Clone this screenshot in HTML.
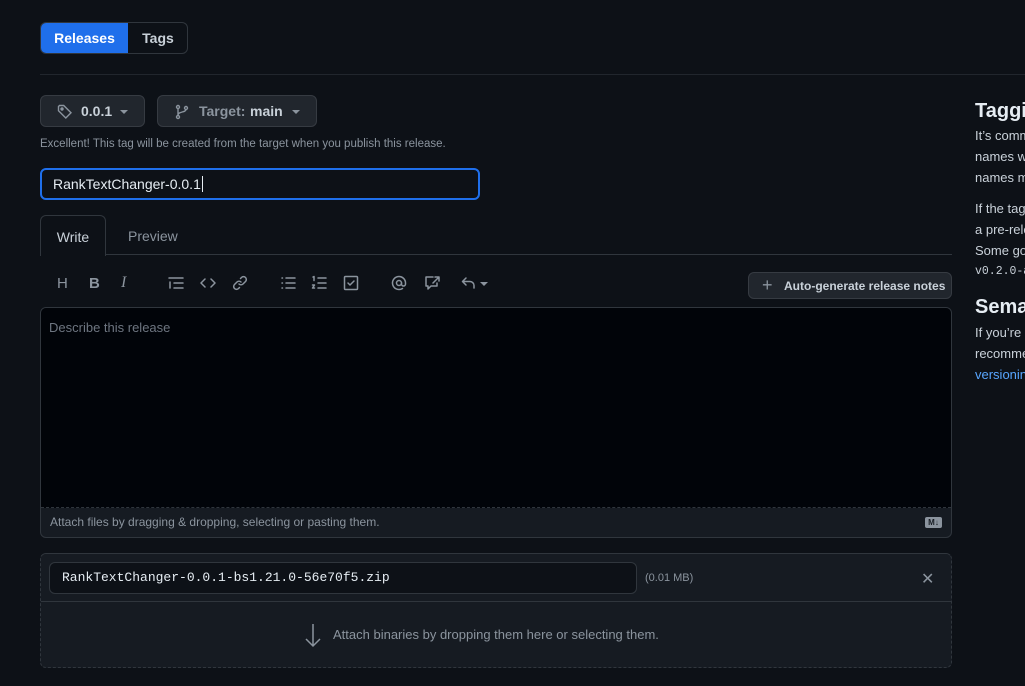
<!DOCTYPE html>
<html><head><meta charset="utf-8"><style>
*{box-sizing:border-box;margin:0;padding:0}
body{width:1025px;height:686px;overflow:hidden;background:#0d1117;font-family:"Liberation Sans",sans-serif;color:#c9d1d9;position:relative}
.a{position:absolute}
.btn{position:absolute;background:#21262d;border:1px solid #363b42;border-radius:6px;display:flex;align-items:center;font-size:14px;font-weight:bold;color:#c9d1d9}
svg{display:block}
.ic{position:absolute;top:275px;width:16px;height:16px;stroke:#8b949e;fill:none;stroke-width:1.5;stroke-linecap:round;stroke-linejoin:round}
.sidewrap{position:absolute;left:975px;top:0;width:50px;height:686px;overflow:hidden}
.side{position:absolute;left:0;font-size:13px;color:#c9d1d9;white-space:nowrap}
</style></head><body>
<div class="a" style="left:40px;top:22px;width:148px;height:32px;border:1px solid #30363d;border-radius:6px;overflow:hidden;font-size:14px;font-weight:bold">
 <div class="a" style="left:0;top:0;width:87px;height:30px;background:#1f6feb;color:#fff;display:flex;align-items:center;justify-content:center">Releases</div>
 <div class="a" style="left:87px;top:0;width:60px;height:30px;color:#c9d1d9;display:flex;align-items:center;justify-content:center">Tags</div>
</div>
<div class="a" style="left:40px;top:74px;width:985px;height:1px;background:#21262d"></div>

<div class="btn" style="left:40px;top:95px;width:105px;height:32px">
 <svg class="a" style="left:16px;top:8px" width="16" height="16" viewBox="0 0 16 16" fill="none" stroke="#8b949e" stroke-width="1.4"><path d="M1.5 2.5v4.2l7.3 7.3 5.2-5.2L6.7 1.5H2.5z"/><circle cx="5" cy="5" r="1" fill="#8b949e"/></svg>
 <span class="a" style="left:40px;top:7px">0.0.1</span>
 <span class="a" style="left:79px;top:14px;border:4px solid transparent;border-top:4px solid #8b949e"></span>
</div>
<div class="btn" style="left:157px;top:95px;width:160px;height:32px">
 <svg class="a" style="left:16px;top:8px" width="16" height="16" viewBox="0 0 16 16" fill="none" stroke="#8b949e" stroke-width="1.4"><circle cx="4" cy="3" r="1.5"/><circle cx="4" cy="13" r="1.5"/><circle cx="12" cy="4" r="1.5"/><path d="M4 4.5v7M12 5.5c0 3-8 2-8 5.5"/></svg>
 <span class="a" style="left:41px;top:7px;color:#8b949e">Target:</span>
 <span class="a" style="left:92px;top:7px">main</span>
 <span class="a" style="left:134px;top:14px;border:4px solid transparent;border-top:4px solid #8b949e"></span>
</div>
<div class="a" style="left:40px;top:138px;font-size:11.5px;color:#8b949e">Excellent! This tag will be created from the target when you publish this release.</div>
<div class="a" style="left:40px;top:168px;width:440px;height:32px;border:2px solid #1f6feb;border-radius:6px;background:#0d1117;font-size:14px;padding:6px 11px;color:#e6edf3">RankTextChanger-0.0.1<span style="border-left:1px solid #e6edf3;margin-left:1px"></span></div>

<div class="a" style="left:40px;top:215px;width:66px;height:41px;border:1px solid #30363d;border-bottom:none;border-radius:6px 6px 0 0;background:#0d1117;font-size:14px;color:#c9d1d9;text-align:center;padding-top:13px;z-index:2">Write</div>
<div class="a" style="left:128px;top:228px;font-size:14px;color:#8b949e">Preview</div>
<div class="a" style="left:40px;top:254px;width:912px;height:1px;background:#30363d"></div>

<div class="a" style="left:57px;top:275px;font-size:15px;color:#8b949e">H</div>
<div class="a" style="left:89px;top:275px;font-size:15px;font-weight:bold;color:#8b949e">B</div>
<div class="a" style="left:121px;top:274px;font-size:16px;font-style:italic;color:#8b949e;font-family:'Liberation Serif',serif">I</div>
<svg class="ic" style="left:168px" viewBox="0 0 16 16"><path d="M1 3h14M6 8h9M6 13h9M2 7v6"/></svg>
<svg class="ic" style="left:200px" viewBox="0 0 16 16"><path d="M5 4L1 8l4 4M11 4l4 4-4 4"/></svg>
<svg class="ic" style="left:232px" viewBox="0 0 16 16"><path d="M7 9a3 3 0 0 0 4 0l2.5-2.5a2.8 2.8 0 0 0-4-4L8.5 3.5M9 7a3 3 0 0 0-4 0L2.5 9.5a2.8 2.8 0 0 0 4 4l1-1"/></svg>
<svg class="ic" style="left:280px" viewBox="0 0 16 16"><path d="M6 3h9M6 8h9M6 13h9M2 3h.5M2 8h.5M2 13h.5"/></svg>
<svg class="ic" style="left:311px" viewBox="0 0 16 16"><path d="M7 3h8M7 8h8M7 13h8M2 2l1-.5v4M1.5 10h2l-2 3h2"/></svg>
<svg class="ic" style="left:343px" viewBox="0 0 16 16"><rect x="1.5" y="1.5" width="13" height="13" rx="1"/><path d="M5 8l2 2 4-4"/></svg>
<svg class="ic" style="left:391px" viewBox="0 0 16 16"><circle cx="8" cy="8" r="2.5"/><path d="M10.5 8v1a2 2 0 0 0 4 0V8a6.5 6.5 0 1 0-3 5.5"/></svg>
<svg class="ic" style="left:424px" viewBox="0 0 16 16"><path d="M9 2H2v9h2v3l3-3h6V8M11 2h4v4M15 2l-6 6"/></svg>
<svg class="ic" style="left:461px" viewBox="0 0 16 16"><path d="M5 3L1.5 6.5 5 10M1.5 6.5H9a4 4 0 0 1 4 4V13"/></svg>
<span class="a" style="left:480px;top:282px;border:4px solid transparent;border-top:4px solid #8b949e"></span>

<div class="btn" style="left:748px;top:272px;width:204px;height:27px;font-size:12px">
 <span class="a" style="left:13px;top:2px;font-size:18px;font-weight:normal;color:#8b949e">+</span>
 <span class="a" style="left:35px;top:6px">Auto-generate release notes</span>
</div>

<div class="a" style="left:40px;top:307px;width:912px;height:231px;border:1px solid #30363d;border-radius:6px;background:#161b22;overflow:hidden">
 <div class="a" style="left:0;top:0;width:910px;height:200px;background:#010409;border-bottom:1px dashed #30363d"></div>
 <div class="a" style="left:8px;top:12px;font-size:13px;color:#6e7681">Describe this release</div>
 <div class="a" style="left:9px;top:207px;font-size:12px;color:#8b949e">Attach files by dragging &amp; dropping, selecting or pasting them.</div>
 <div class="a" style="left:884px;top:209px;width:17px;height:11px;background:#8b949e;border-radius:2px;font-size:8px;font-weight:bold;color:#161b22;text-align:center;line-height:11px">M↓</div>
</div>

<div class="a" style="left:40px;top:553px;width:912px;height:115px;border:1px dashed #30363d;border-top:1px solid #30363d;border-radius:6px;background:#161b22;overflow:hidden">
 <div class="a" style="left:0;top:0;width:910px;height:48px;background:#161b22;border-bottom:1px solid #30363d"></div>
 <div class="a" style="left:8px;top:8px;width:588px;height:32px;border:1px solid #30363d;border-radius:6px;background:#0d1117;font-family:'Liberation Mono',monospace;font-size:13px;color:#e6edf3;padding:7px 12px">RankTextChanger-0.0.1-bs1.21.0-56e70f5.zip</div>
 <div class="a" style="left:604px;top:18px;font-size:11px;color:#8b949e">(0.01 MB)</div>
 <div class="a" style="left:880px;top:15px;font-size:16px;color:#8b949e">✕</div>
 <svg class="a" style="left:262px;top:68px" width="20" height="26" viewBox="0 0 20 26" fill="none" stroke="#8b949e" stroke-width="1.5"><path d="M10 2v22M3 17l7 7 7-7"/></svg>
 <div class="a" style="left:292px;top:73px;font-size:13px;color:#8b949e">Attach binaries by dropping them here or selecting them.</div>
</div>

<div class="sidewrap">
<div class="side" style="top:100px;font-size:20px;font-weight:bold;color:#e6edf3">Tagging suggestions</div>
<div class="side" style="top:128px">It’s common practice to prefix your version</div>
<div class="side" style="top:149px">names with the letter v. Some good tag</div>
<div class="side" style="top:170px">names might be v1.0.0 or v2.3.4.</div>
<div class="side" style="top:201px">If the tag isn’t meant for production use, add</div>
<div class="side" style="top:222px">a pre-release version after the version name.</div>
<div class="side" style="top:243px">Some good pre-release versions might be</div>
<div class="side" style="top:265px;font-family:'Liberation Mono',monospace;font-size:11.5px">v0.2.0-alpha</div>
<div class="side" style="top:296px;font-size:20px;font-weight:bold;color:#e6edf3">Semantic versioning</div>
<div class="side" style="top:325px">If you’re new to releasing software, we highly</div>
<div class="side" style="top:346px">recommend reading about semantic</div>
<div class="side" style="top:367px;color:#58a6ff">versioning.</div>
</div>
</body></html>
